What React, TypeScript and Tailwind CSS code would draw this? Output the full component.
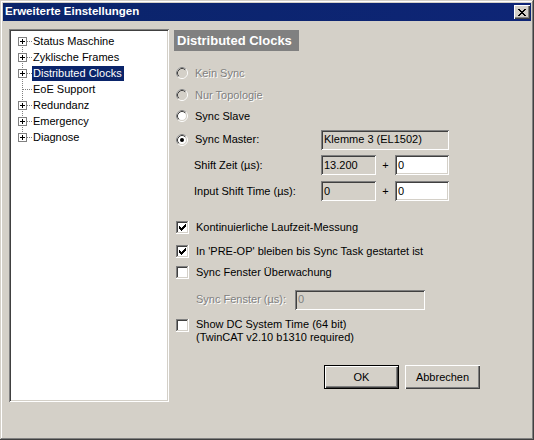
import React from "react";

const F = "font-['Liberation_Sans',Arial,sans-serif]";
const SUNKEN =
  "shadow-[inset_1px_1px_0_#808080,inset_-1px_-1px_0_#ffffff,inset_2px_2px_0_#404040,inset_-2px_-2px_0_#d4d0c8]";
const RAISED =
  "shadow-[inset_1px_1px_0_#ffffff,inset_-1px_-1px_0_#404040,inset_-2px_-2px_0_#808080]";
const DIS = "text-[#808080] [text-shadow:1px_1px_0_#ffffff]";

function Radio({ checked, disabled }: { checked?: boolean; disabled?: boolean }) {
  return (
    <svg width="12" height="12" viewBox="0 0 12 12" className="shrink-0">
      <circle cx="6" cy="6" r="5.5" fill="none" stroke="#ffffff" />
      <path d="M2.11 9.89 A5.5 5.5 0 0 1 9.89 2.11" fill="none" stroke="#808080" />
      <circle cx="6" cy="6" r="4.5" fill={disabled ? "#d4d0c8" : "#ffffff"} stroke="#d4d0c8" />
      <path d="M2.82 9.18 A4.5 4.5 0 0 1 9.18 2.82" fill="none" stroke="#404040" />
      {checked && <circle cx="6" cy="6" r="2" fill="#000000" />}
    </svg>
  );
}

function Check({ checked }: { checked?: boolean }) {
  const marks: [number, number, number][] = [
    [3, 9, 1],
    [4, 8, 2],
    [5, 3, 1],
    [5, 7, 3],
    [6, 3, 2],
    [6, 6, 3],
    [7, 3, 5],
    [8, 4, 3],
    [9, 5, 1],
  ];
  return (
    <svg width="13" height="13" viewBox="0 0 13 13" shapeRendering="crispEdges" className="shrink-0">
      <rect x="0" y="0" width="13" height="13" fill="#ffffff" />
      <rect x="0" y="0" width="12" height="1" fill="#808080" />
      <rect x="0" y="0" width="1" height="12" fill="#808080" />
      <rect x="1" y="1" width="10" height="1" fill="#404040" />
      <rect x="1" y="1" width="1" height="10" fill="#404040" />
      <rect x="1" y="11" width="11" height="1" fill="#d4d0c8" />
      <rect x="11" y="1" width="1" height="11" fill="#d4d0c8" />
      {checked &&
        marks.map(([y, x, w], i) => <rect key={i} x={x} y={y} width={w} height="1" fill="#000000" />)}
    </svg>
  );
}

function CloseX() {
  const rows: [number, number][][] = [
    [[0, 2], [6, 2]],
    [[1, 2], [5, 2]],
    [[2, 4]],
    [[3, 2]],
    [[2, 4]],
    [[1, 2], [5, 2]],
    [[0, 2], [6, 2]],
  ];
  return (
    <svg width="8" height="7" viewBox="0 0 8 7" shapeRendering="crispEdges">
      {rows.map((r, y) =>
        r.map(([x, w], i) => <rect key={`${y}-${i}`} x={x} y={y} width={w} height="1" fill="#000000" />)
      )}
    </svg>
  );
}

function TreeRow({
  label,
  expandable = true,
  selected,
  first,
  last,
}: {
  label: string;
  expandable?: boolean;
  selected?: boolean;
  first?: boolean;
  last?: boolean;
}) {
  return (
    <div className="flex h-[16px] items-center">
      <svg width="18" height="16" viewBox="0 0 18 16" shapeRendering="crispEdges" className="shrink-0">
        <line
          x1="8.5"
          y1={first ? 8 : 0}
          x2="8.5"
          y2={last ? 8 : 16}
          stroke="#808080"
          strokeDasharray="1 1"
        />
        {expandable ? (
          <>
            <line x1="13" y1="8.5" x2="18" y2="8.5" stroke="#808080" strokeDasharray="1 1" />
            <rect x="4.5" y="4.5" width="8" height="8" fill="#ffffff" stroke="#808080" />
            <line x1="6" y1="8.5" x2="11" y2="8.5" stroke="#000000" />
            <line x1="8.5" y1="6" x2="8.5" y2="11" stroke="#000000" />
          </>
        ) : (
          <line x1="9" y1="8.5" x2="18" y2="8.5" stroke="#808080" strokeDasharray="1 1" />
        )}
      </svg>
      <span
        className={`flex h-[15px] items-center pl-[1px] pr-[2px] leading-none ${
          selected ? "bg-[#0a246a] text-white" : "text-black"
        }`}
      >
        {label}
      </span>
    </div>
  );
}

function Field({
  w,
  value,
  gray,
  disabled,
}: {
  w: string;
  value: string;
  gray?: boolean;
  disabled?: boolean;
}) {
  return (
    <div
      className={`${w} flex h-[20px] shrink-0 items-center pl-[3px] ${SUNKEN} ${
        gray || disabled ? "bg-[#d4d0c8]" : "bg-white"
      } ${disabled ? "text-[#808080]" : "text-black"}`}
    >
      {value}
    </div>
  );
}

export default function App() {
  return (
    <div
      className={`${F} relative h-[440px] w-[534px] overflow-hidden bg-[#d4d0c8] p-[3px] text-[11px] text-black shadow-[inset_-1px_-1px_0_#404040,inset_1px_1px_0_#d4d0c8,inset_-2px_-2px_0_#808080,inset_2px_2px_0_#ffffff]`}
    >
      {/* title bar */}
      <div className="flex h-[18px] items-center justify-between bg-gradient-to-r from-[#0a246a] to-[#0e2576] pl-[2px] pr-[1px]">
        <span className="text-[11.5px] font-bold text-white">Erweiterte Einstellungen</span>
        <div className={`flex h-[14px] w-[16px] items-center justify-center bg-[#d4d0c8] ${RAISED}`}>
          <CloseX />
        </div>
      </div>

      {/* body */}
      <div className="mt-[8px] flex pl-[6px]">
        {/* tree */}
        <div
          className={`h-[373px] w-[160px] shrink-0 bg-white pl-[5px] pt-[4px] shadow-[inset_1px_1px_0_#808080,inset_-1px_-1px_0_#ffffff,inset_2px_2px_0_#404040,inset_-2px_-2px_0_#d4d0c8]`}
        >
          <TreeRow label="Status Maschine" first />
          <TreeRow label="Zyklische Frames" />
          <TreeRow label="Distributed Clocks" selected />
          <TreeRow label="EoE Support" expandable={false} />
          <TreeRow label="Redundanz" />
          <TreeRow label="Emergency" />
          <TreeRow label="Diagnose" last />
        </div>

        {/* right panel */}
        <div className="ml-[5px] flex flex-1 flex-col">
          <div className="mt-[1px] flex h-[21px] w-[125px] items-center bg-[#808080] pl-[3px] text-[13px] font-bold text-white">
            Distributed Clocks
          </div>

          <div className="mt-[11px] flex h-[22px] items-center gap-[7px] pl-[2px]">
            <Radio disabled />
            <span className={DIS}>Kein Sync</span>
          </div>
          <div className="flex h-[22px] items-center gap-[7px] pl-[2px]">
            <Radio disabled />
            <span className={DIS}>Nur Topologie</span>
          </div>
          <div className="flex h-[20px] items-center gap-[7px] pl-[2px]">
            <Radio />
            <span>Sync Slave</span>
          </div>
          <div className="mt-[3px] flex h-[21px] items-center">
            <div className="flex w-[147px] items-center gap-[7px] pl-[2px]">
              <Radio checked />
              <span>Sync Master:</span>
            </div>
            <Field w="w-[128px]" value="Klemme 3 (EL1502)" gray />
          </div>

          <div className="mt-[5px] flex h-[20px] items-center">
            <div className="w-[147px] pl-[20px]">Shift Zeit (µs):</div>
            <Field w="w-[55px]" value="13.200" gray />
            <span className="w-[19px] text-center">+</span>
            <Field w="w-[54px]" value="0" />
          </div>
          <div className="mt-[6px] flex h-[20px] items-center">
            <div className="w-[147px] pl-[20px]">Input Shift Time (µs):</div>
            <Field w="w-[55px]" value="0" gray />
            <span className="w-[19px] text-center">+</span>
            <Field w="w-[54px]" value="0" />
          </div>

          <div className="mt-[16px] flex h-[20px] items-center gap-[7px] pl-[2px]">
            <Check checked />
            <span>Kontinuierliche Laufzeit-Messung</span>
          </div>
          <div className="mt-[4px] flex h-[20px] items-center gap-[7px] pl-[2px]">
            <Check checked />
            <span>In &apos;PRE-OP&apos; bleiben bis Sync Task gestartet ist</span>
          </div>
          <div className="mt-[1px] flex h-[20px] items-center gap-[7px] pl-[2px]">
            <Check />
            <span>Sync Fenster Überwachung</span>
          </div>

          <div className="mt-[7px] flex h-[21px] items-center">
            <div className={`w-[121px] pl-[22px] ${DIS}`}>Sync Fenster (µs):</div>
            <Field w="w-[130px]" value="0" disabled />
          </div>

          <div className="mt-[8px] flex items-start gap-[7px] pl-[2px]">
            <div className="mt-[1px]">
              <Check />
            </div>
            <div className="leading-[13px]">
              <div>Show DC System Time (64 bit)</div>
              <div>(TwinCAT v2.10 b1310 required)</div>
            </div>
          </div>

          <div className="mt-[21px] flex h-[24px] gap-[6px] pl-[150px]">
            <div className="h-[24px] w-[75px] border border-black">
              <div className={`flex h-full w-full items-center justify-center bg-[#d4d0c8] ${RAISED}`}>
                OK
              </div>
            </div>
            <div
              className={`flex h-[24px] w-[75px] items-center justify-center bg-[#d4d0c8] ${RAISED}`}
            >
              Abbrechen
            </div>
          </div>
        </div>
      </div>
    </div>
  );
}
